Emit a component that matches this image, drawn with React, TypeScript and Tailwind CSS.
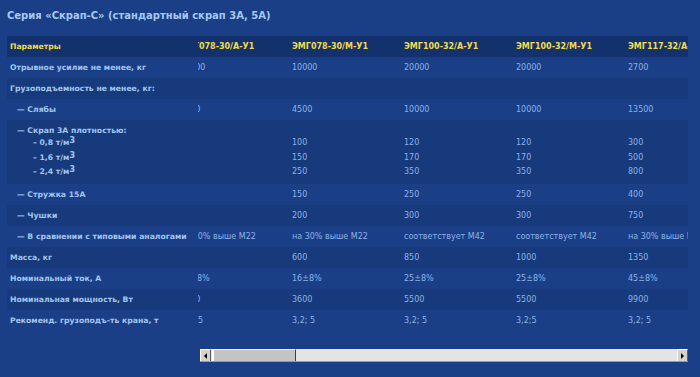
const font = { fontFamily: '"DejaVu Sans", Verdana, sans-serif' };

const models = [
  "ЭМГ078-30/А-У1",
  "ЭМГ078-30/М-У1",
  "ЭМГ100-32/А-У1",
  "ЭМГ100-32/М-У1",
  "ЭМГ117-32/А-У1",
  "ЭМГ117-32/М-У1",
];

type Row = {
  label: string;
  indent?: boolean;
  dark?: boolean;
  values: string[];
};

const rowsTop: Row[] = [
  { label: "Отрывное усилие не менее, кг", values: ["10000", "10000", "20000", "20000", "2700", "2700"] },
  { label: "Грузоподъемность не менее, кг:", dark: true, values: ["", "", "", "", "", ""] },
  { label: "— Слябы", indent: true, values: ["3000", "4500", "10000", "10000", "13500", "13500"] },
];

const scrap = [
  ["80", "110", "180"],
  ["100", "150", "250"],
  ["120", "170", "350"],
  ["120", "170", "350"],
  ["300", "500", "800"],
  ["300", "500", "800"],
];

const rowsBottom: Row[] = [
  { label: "— Стружка 15А", indent: true, values: ["90", "150", "250", "250", "400", "400"] },
  { label: "— Чушки", indent: true, dark: true, values: ["120", "200", "300", "300", "750", "750"] },
  {
    label: "— В сравнении с типовыми аналогами",
    indent: true,
    values: ["на 30% выше М22", "на 30% выше М22", "соответствует М42", "соответствует М42", "на 30% выше М42", "на 30% выше М42"],
  },
  { label: "Масса, кг", dark: true, values: ["450", "600", "850", "1000", "1350", "1350"] },
  { label: "Номинальный ток, А", values: ["16±8%", "16±8%", "25±8%", "25±8%", "45±8%", "45±8%"] },
  { label: "Номинальная мощность, Вт", dark: true, values: ["3600", "3600", "5500", "5500", "9900", "9900"] },
  { label: "Рекоменд. грузоподъ-ть крана, т", values: ["3,2; 5", "3,2; 5", "3,2; 5", "3,2;5", "3,2; 5", "3,2; 5"] },
];

function TableRow({ row }: { row: Row }) {
  return (
    <div className={`flex h-[21px] items-center ${row.dark ? "bg-[#173a7c]" : ""}`}>
      <div
        className={`w-[191px] shrink-0 text-[7.7px] font-bold text-[#a3c6f0] whitespace-nowrap ${
          row.indent ? "pl-[10px]" : "pl-[3px]"
        }`}
      >
        {row.label}
      </div>
      <div className="flex-1 overflow-hidden">
        <div className="flex -ml-[18px]">
          {row.values.map((v, i) => (
            <div key={i} className="w-[112px] shrink-0 text-[8px] text-[#8cb3e6] whitespace-nowrap">
              {v}
            </div>
          ))}
        </div>
      </div>
    </div>
  );
}

function Cube({ text }: { text: string }) {
  return (
    <span>
      {text}
      <sup className="text-[8px] leading-none relative -top-[2px]">3</sup>
    </span>
  );
}

export default function App() {
  return (
    <div className="w-full h-[377px] bg-[#1a3f87] px-[7px] pt-[9px] overflow-hidden" style={font}>
      <h2 className="text-[10px] leading-[13px] font-bold text-[#a6c8ef] whitespace-nowrap">
        Серия «Скрап-С» (стандартный скрап 3А, 5А)
      </h2>

      <div className="mt-[14px] w-[681px]">
        {/* header */}
        <div className="flex h-[21px] items-center bg-[#13316d]">
          <div className="w-[191px] shrink-0 pl-[3px] text-[7.7px] font-bold text-[#f2dc48]">Параметры</div>
          <div className="flex-1 overflow-hidden">
            <div className="flex -ml-[18px]">
              {models.map((m) => (
                <div key={m} className="w-[112px] shrink-0 text-[8px] font-bold text-[#f2dc48] whitespace-nowrap">
                  {m}
                </div>
              ))}
            </div>
          </div>
        </div>

        {rowsTop.map((r) => (
          <TableRow key={r.label} row={r} />
        ))}

        {/* scrap density block */}
        <div className="flex h-[64px] bg-[#173a7c] pt-[6px]">
          <div className="w-[191px] shrink-0 text-[7.7px] font-bold text-[#a3c6f0] whitespace-nowrap">
            <div className="h-[10px] leading-[10px] pl-[10px]">— Скрап 3А плотностью:</div>
            <div className="h-[14.5px] leading-[14.5px] pl-[26px]">
              <Cube text="– 0,8 т/м" />
            </div>
            <div className="h-[14.5px] leading-[14.5px] pl-[26px]">
              <Cube text="– 1,6 т/м" />
            </div>
            <div className="h-[14.5px] leading-[14.5px] pl-[26px]">
              <Cube text="– 2,4 т/м" />
            </div>
          </div>
          <div className="flex-1 overflow-hidden">
            <div className="flex -ml-[18px]">
              {scrap.map((c, i) => (
                <div key={i} className="w-[112px] shrink-0 text-[8px] text-[#8cb3e6]">
                  <div className="h-[10px]" />
                  {c.map((v, j) => (
                    <div key={j} className="h-[14.5px] leading-[14.5px]">
                      {v}
                    </div>
                  ))}
                </div>
              ))}
            </div>
          </div>
        </div>

        {rowsBottom.map((r) => (
          <TableRow key={r.label} row={r} />
        ))}

        {/* horizontal scrollbar */}
        <div className="mt-[18px] ml-[193px] flex h-[13px] w-[488px] bg-[#e4e4e4] border-b border-[#9a9a9a]">
          <div className="w-[11px] h-full bg-[#d6d3cc] border-t border-l border-white border-r border-r-[#606060] border-b-[#606060] flex items-center justify-center">
            <div className="w-0 h-0 border-y-[3px] border-y-transparent border-r-[3px] border-r-black" />
          </div>
          <div className="ml-[1px] w-[84px] h-full bg-[#c4c4c4] border-l-2 border-l-white border-r border-r-[#404040] border-t border-t-[#f0f0f0]" />
          <div className="flex-1" />
          <div className="w-[11px] h-full bg-[#d6d3cc] border-t border-l border-white border-r border-r-[#606060] flex items-center justify-center">
            <div className="w-0 h-0 border-y-[3px] border-y-transparent border-l-[3px] border-l-black" />
          </div>
        </div>
      </div>
    </div>
  );
}
